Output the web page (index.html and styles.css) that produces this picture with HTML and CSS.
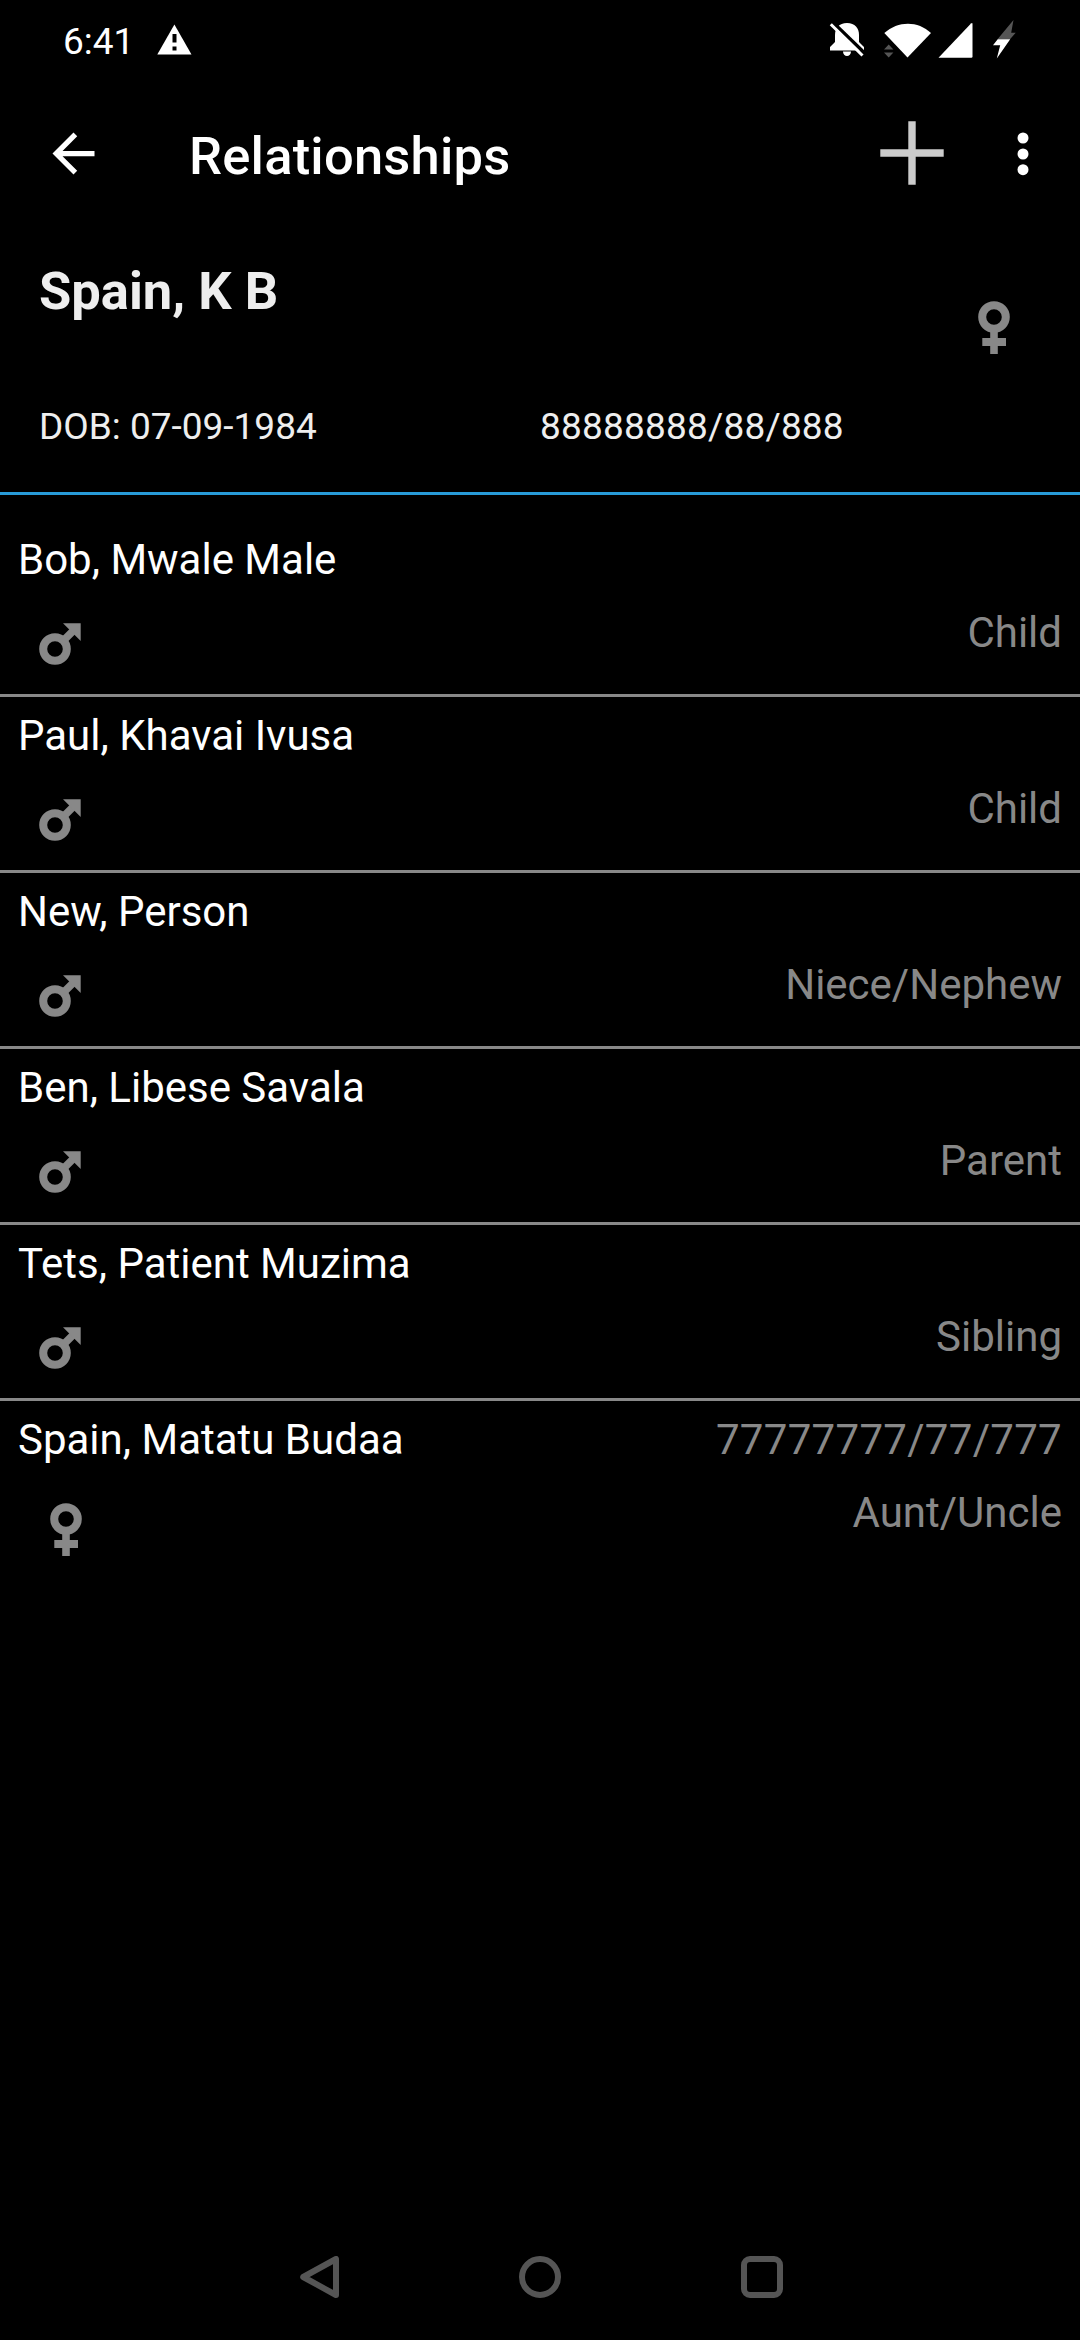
FILE: index.html
```html
<!DOCTYPE html>
<html lang="en">
<head>
  <meta charset="UTF-8" />
  <meta name="viewport" content="width=device-width, initial-scale=1.0"/>
  <title>Relationships</title>
  <link rel="stylesheet" href="styles.css">
</head>
<body>

<!-- shared icons -->
<svg class="defs" width="0" height="0">
  <symbol id="male" viewBox="0 0 42 42">
    <circle cx="16" cy="26" r="11.8" fill="none" stroke="currentColor" stroke-width="8"/>
    <path d="M23 19L35 7" stroke="currentColor" stroke-width="7.5"/>
    <path d="M24 0.3H41.7V18Z" fill="currentColor"/>
  </symbol>
  <symbol id="female" viewBox="0 0 32 53">
    <circle cx="16" cy="16" r="11.8" fill="none" stroke="currentColor" stroke-width="8"/>
    <path d="M12.2 29h7.6v8H28v8h-8.2v8h-7.6v-8H4.3v-8h7.9z" fill="currentColor"/>
  </symbol>
</svg>

<div class="status-bar">
  <span class="clock">6:41</span>
  <svg class="warning" viewBox="0 0 35 31">
    <path d="M17.4 0.5L34.5 30.5H0.3Z" fill="#fff"/>
    <path d="M15.5 10h4v8.5h-4zM15.5 22.5h4v4h-4z" fill="#000"/>
  </svg>
  <svg class="bell" viewBox="0 0 36 36">
    <path d="M1 28.5V25L6 20V13C6 6 10 1 18 1S30 6 30 13V20L35 25V28.5ZM14 29.5h8a4 4.5 0 0 1-8 0z" fill="#fff"/>
    <path d="M3.5 0L36 31.5" stroke="#000" stroke-width="3.5"/>
    <path d="M1.8 2.2L33.5 33.5" stroke="#fff" stroke-width="3"/>
  </svg>
  <svg class="wifi" viewBox="0 0 48 36">
    <path d="M0.3 10C14 -2.5 34 -2.5 47 10L23.5 34.5Z" fill="#fff"/>
    <path d="M0 26.5l4.7-5 4.700 5zM0 29.5h9.4l-4.7 5z" fill="#555"/>
  </svg>
  <svg class="signal" viewBox="0 0 35 35">
    <path d="M0.5 34.7L33 0.5Q34.5 -0.5 34.5 1V33.5Q34.5 34.7 33.3 34.7Z" fill="#fff"/>
  </svg>
  <svg class="bolt" viewBox="0 0 23 39">
    <path d="M20.5 0L4.5 19.2H17L22.7 12.7H18.2Z" fill="#555"/>
    <path d="M4.7 19.2H17.2L3.8 38.5L7.2 25.3H0Z" fill="#fff"/>
  </svg>
</div>

<div class="app-bar">
  <svg class="back" viewBox="0 0 24 24"><path d="M20 11H7.83l5.59-5.59L12 4l-8 8 8 8 1.41-1.41L7.83 13H20v-2z" fill="#fff"/></svg>
  <h1>Relationships</h1>
  <svg class="add" viewBox="0 0 64 64"><path d="M28.3 0.3h7.4v28h28v7.4h-28v28h-7.4v-28h-28v-7.4h28z" fill="#ccc"/></svg>
  <svg class="more" viewBox="0 0 12 44">
    <circle cx="6" cy="6" r="5.5" fill="#fff"/>
    <circle cx="6" cy="22" r="5.5" fill="#fff"/>
    <circle cx="6" cy="37.7" r="5.5" fill="#fff"/>
  </svg>
</div>

<div class="patient">
  <div class="patient-top">
    <h2>Spain, K B</h2>
    <svg class="patient-gender"><use href="#female"/></svg>
  </div>
  <div class="patient-info">
    <span>DOB: 07-09-1984</span>
    <span class="patient-id">88888888/88/888</span>
  </div>
</div>

<ul class="relations">
  <li>
    <div class="line"><span class="name">Bob, Mwale Male</span></div>
    <div class="line"><svg class="male"><use href="#male"/></svg><span class="type">Child</span></div>
  </li>
  <li>
    <div class="line"><span class="name">Paul, Khavai Ivusa</span></div>
    <div class="line"><svg class="male"><use href="#male"/></svg><span class="type">Child</span></div>
  </li>
  <li>
    <div class="line"><span class="name">New, Person</span></div>
    <div class="line"><svg class="male"><use href="#male"/></svg><span class="type">Niece/Nephew</span></div>
  </li>
  <li>
    <div class="line"><span class="name">Ben, Libese Savala</span></div>
    <div class="line"><svg class="male"><use href="#male"/></svg><span class="type">Parent</span></div>
  </li>
  <li>
    <div class="line"><span class="name">Tets, Patient Muzima</span></div>
    <div class="line"><svg class="male"><use href="#male"/></svg><span class="type">Sibling</span></div>
  </li>
  <li>
    <div class="line"><span class="name">Spain, Matatu Budaa</span><span class="identifier">77777777/77/777</span></div>
    <div class="line"><svg class="female"><use href="#female"/></svg><span class="type">Aunt/Uncle</span></div>
  </li>
</ul>

<div class="nav-bar">
  <svg viewBox="0 0 42 42"><path d="M39 3V39L6.2 21Z" fill="none" stroke="#555" stroke-width="6" stroke-linejoin="round"/></svg>
  <svg viewBox="0 0 42 42"><circle cx="21" cy="21" r="18" fill="none" stroke="#555" stroke-width="6"/></svg>
  <svg viewBox="0 0 42 42"><rect x="3" y="3" width="36" height="36" rx="6" fill="none" stroke="#555" stroke-width="6"/></svg>
</div>

</body>
</html>
```
FILE: styles.css
```css
html, body {
  margin: 0;
  padding: 0;
  background: #000;
  font-family: Roboto, "Liberation Sans", sans-serif;
}
body {
  display: flex;
  flex-direction: column;
  height: 2340px;
  overflow: hidden;
  color: #fff;
}
svg {
  display: block;
  flex: none;
}
.defs {
  display: none;
}
.status-bar {
  display: flex;
  align-items: flex-start;
  box-sizing: border-box;
  height: 80px;
  padding: 20px 64px 0 63px;
}
.clock {
  width: 94px;
  font-size: 37px;
  line-height: 43px;
}
.warning {
  width: 35px;
  height: 31px;
  margin: 4px auto 0 0;
}
.bell {
  width: 36px;
  height: 36px;
  margin: 2px 19px 0 0;
}
.wifi {
  width: 48px;
  height: 36px;
  margin: 3px 6px 0 0;
}
.signal {
  width: 35px;
  height: 35px;
  margin: 3px 20px 0 0;
}
.bolt {
  width: 23px;
  height: 39px;
}
.app-bar {
  display: flex;
  align-items: center;
  height: 147px;
  padding: 0 51px 0 42px;
}
.back {
  width: 63px;
  height: 63px;
}
.app-bar h1 {
  margin: 4px auto 0 84px;
  font-size: 52.5px;
  font-weight: 500;
  line-height: 62px;
  letter-spacing: 0.2px;
}
.add {
  width: 64px;
  height: 64px;
  margin: -1px 73px 0 0;
}
.more {
  width: 12px;
  height: 44px;
}
.patient {
  box-sizing: border-box;
  height: 268px;
  padding: 33px 38px 0 39px;
  border-bottom: 3px solid #289bd8;
  color: #eee;
}
.patient-top {
  display: flex;
  justify-content: space-between;
  height: 145px;
}
.patient-top h2 {
  margin: 0;
  font-size: 52.5px;
  font-weight: 700;
  line-height: 62px;
}
.patient-gender {
  width: 32px;
  height: 53px;
  margin: 41px 32px 0 0;
  color: #888;
}
.patient-info {
  display: grid;
  grid-template-columns: 501px 1fr;
  font-size: 37px;
  line-height: 44px;
}
.patient-id {
  letter-spacing: 0.2px;
}
.relations {
  flex: 1;
  margin: 0;
  padding: 26px 0 0;
  list-style: none;
  font-size: 42px;
  line-height: 50px;
}
.relations li {
  box-sizing: border-box;
  height: 176px;
  padding: 14px 18px 0;
  border-bottom: 3px solid #888;
}
.relations li:last-child {
  border-bottom: none;
}
.line {
  display: flex;
  justify-content: space-between;
  height: 73px;
}
.identifier, .type {
  color: #888;
}
.identifier {
  letter-spacing: 0.3px;
}
.male {
  width: 42px;
  height: 42px;
  margin: 15px 0 0 21px;
  color: #888;
}
.female {
  width: 32px;
  height: 53px;
  margin: 15px 0 0 32px;
  color: #888;
}
.nav-bar {
  display: flex;
  justify-content: center;
  align-items: center;
  gap: 180px;
  height: 126px;
}
.nav-bar svg {
  width: 42px;
  height: 42px;
}
```
